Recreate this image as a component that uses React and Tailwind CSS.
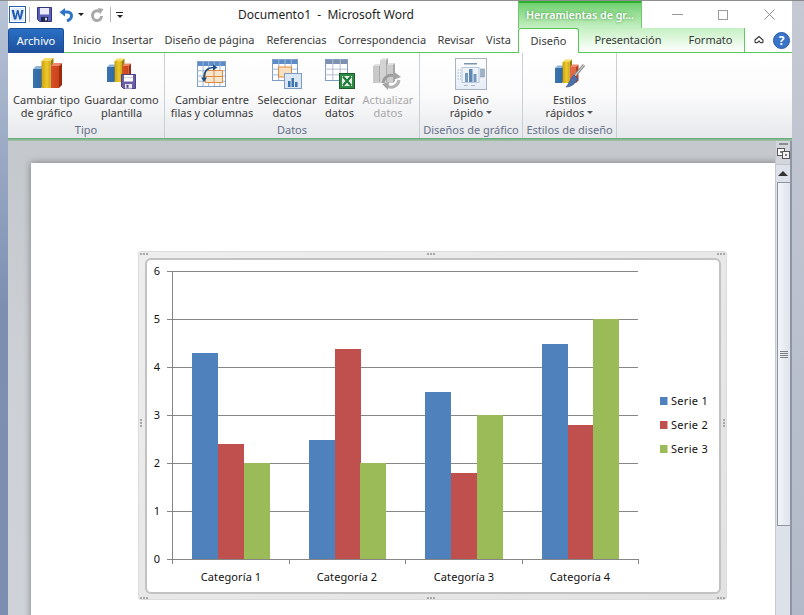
import React from "react";

function Bar({ x, y, w, h, d = 3, front, side, top, stroke }) {
  return (
    <g>
      <polygon points={`${x},${y} ${x + d},${y - d} ${x + w + d},${y - d} ${x + w},${y}`} fill={top} />
      <polygon points={`${x + w},${y} ${x + w + d},${y - d} ${x + w + d},${y + h - d} ${x + w},${y + h}`} fill={side} />
      <rect x={x} y={y} width={w} height={h} fill={front} />
      {stroke && <rect x={x + 0.5} y={y + 0.5} width={w - 1} height={h - 1} fill="none" stroke={stroke} strokeOpacity="0.5" />}
    </g>
  );
}
const BLUE = { front: "url(#gBlue)", side: "#1f4f86", top: "#8fb4dc" };
const YEL = { front: "url(#gYel)", side: "#9b7d10", top: "#f6dc63" };
const RED = { front: "url(#gRed)", side: "#9c2c10", top: "#f0896c" };

function Defs() {
  return (
    <defs>
      <linearGradient id="gBlue" x1="0" x2="1" y1="0" y2="0"><stop offset="0" stopColor="#3d74ad" /><stop offset="1" stopColor="#2e6aa8" /></linearGradient>
      <linearGradient id="gYel" x1="0" x2="1" y1="0" y2="0"><stop offset="0" stopColor="#c9a214" /><stop offset="0.6" stopColor="#eec92a" /><stop offset="1" stopColor="#cfa818" /></linearGradient>
      <linearGradient id="gRed" x1="0" x2="1" y1="0" y2="0"><stop offset="0" stopColor="#d9502a" /><stop offset="1" stopColor="#c94218" /></linearGradient>
    </defs>
  );
}

function Floppy({ x, y, s = 15 }) {
  const k = s / 15;
  return (
    <g transform={`translate(${x} ${y}) scale(${k})`}>
      <path d="M0.5 0.5H14.5V14.5H2.5L0.5 12.5Z" fill="#6a5ea8" stroke="#4a4284" />
      <rect x="3" y="1" width="9" height="6.5" fill="#fff" />
      <rect x="3" y="3" width="9" height="0.8" fill="#c9c5e0" />
      <rect x="4" y="10" width="7" height="4.5" fill="#efeef7" />
      <rect x="5.5" y="10.8" width="2" height="3" fill="#4a4284" />
    </g>
  );
}

function IconChartType() {
  return (
    <svg width="32" height="32" viewBox="0 0 32 32">
      <Defs />
      <Bar x={2} y={11} w={8} h={19} {...BLUE} />
      <Bar x={10.5} y={3} w={9} h={27} {...YEL} />
      <Bar x={20} y={8} w={8} h={22} {...RED} />
    </svg>
  );
}
function IconSaveTemplate() {
  return (
    <svg width="32" height="32" viewBox="0 0 32 32">
      <Defs />
      <Bar x={1} y={9} w={7} h={15} d={2.5} {...BLUE} />
      <Bar x={8.5} y={3} w={7.5} h={21} d={2.5} {...YEL} />
      <Bar x={16.5} y={8} w={6} h={16} d={2.5} {...RED} />
      <Floppy x={15} y={16} />
    </svg>
  );
}
function Grid({ x, y, w, h, cols, rows, head = "#5b8cc8", line = "#9db6d6" }) {
  const cw = w / cols;
  const rh = (h - 4) / rows;
  return (
    <g>
      <rect x={x + 0.5} y={y + 0.5} width={w} height={h} fill="#fff" stroke="#7f9dc2" />
      <rect x={x + 1} y={y + 1} width={w - 1} height={4} fill={head} />
      {Array.from({ length: cols - 1 }, (_, i) => (
        <line key={i} x1={x + cw * (i + 1) + 0.5} x2={x + cw * (i + 1) + 0.5} y1={y} y2={y + h} stroke={line} />
      ))}
      {Array.from({ length: rows - 1 }, (_, i) => (
        <line key={i} y1={y + 4 + rh * (i + 1) + 0.5} y2={y + 4 + rh * (i + 1) + 0.5} x1={x} x2={x + w} stroke={line} />
      ))}
    </g>
  );
}
function IconSwitch() {
  return (
    <svg width="32" height="32" viewBox="0 0 32 32">
      <Grid x={1} y={3} w={28} h={25} cols={5} rows={4} />
      <rect x="9.5" y="12.5" width="17" height="12" fill="#f3e6cf" stroke="#e58a3a" />
      <line x1="18" x2="18" y1="12" y2="25" stroke="#e58a3a" />
      <line x1="9" x2="27" y1="18.5" y2="18.5" stroke="#e58a3a" />
      <path d="M8 20C8 13 12 9.5 18 9.5" fill="none" stroke="#1f4f86" strokeWidth="1.6" />
      <path d="M17 6.5L21.5 9.5L17 12.5Z" fill="#1f4f86" />
      <path d="M5 19.5H11L8 24Z" fill="#1f4f86" />
    </svg>
  );
}
function IconSelect() {
  return (
    <svg width="32" height="32" viewBox="0 0 32 32">
      <Grid x={1} y={1} w={25} h={21} cols={4} rows={3} />
      <rect x="7.5" y="9" width="13" height="10" fill="#f7dfc0" stroke="#e58a3a" />
      <rect x="13.5" y="15.5" width="17" height="15" fill="#dbe7f5" stroke="#7f9dc2" />
      <rect x="17" y="23" width="2.5" height="6" fill="#3d74ad" />
      <rect x="20.5" y="20" width="2.5" height="9" fill="#3d74ad" />
      <rect x="24" y="24" width="2.5" height="5" fill="#3d74ad" />
    </svg>
  );
}
function IconEdit() {
  return (
    <svg width="32" height="32" viewBox="0 0 32 32">
      <Grid x={1} y={1} w={22} h={21} cols={3} rows={3} head="#7f8fb0" line="#b3bed0" />
      <rect x="15.5" y="15.5" width="15" height="15" fill="#2f8a45" stroke="#1c5c2c" />
      <rect x="18" y="18" width="10" height="10" fill="#e7f3e9" />
      <path d="M19 18.5L27 27.5M27 18.5L19 27.5" stroke="#1c7a35" strokeWidth="2.2" />
    </svg>
  );
}
function IconUpdate() {
  return (
    <svg width="32" height="32" viewBox="0 0 32 32">
      <Bar x={1} y={8} w={6} h={17} d={2} front="#c9c9c9" side="#a8a8a8" top="#e0e0e0" />
      <Bar x={8} y={2} w={6} h={23} d={2} front="#d3d3d3" side="#aaaaaa" top="#e6e6e6" />
      <Bar x={15} y={7} w={6} h={18} d={2} front="#cdcdcd" side="#a8a8a8" top="#e0e0e0" />
      <path d="M11 25C12 19 17 16 23 18" fill="none" stroke="#9d9d9d" strokeWidth="3" />
      <path d="M21 13L29 19L21 22Z" fill="#a5a5a5" />
      <path d="M27 22C26 28 20 31 15 28" fill="none" stroke="#b3b3b3" strokeWidth="3" />
      <path d="M17 24L10 26L16 32Z" fill="#a5a5a5" />
    </svg>
  );
}
function IconLayout() {
  return (
    <svg width="32" height="32" viewBox="0 0 32 32">
      <defs>
        <linearGradient id="gLay" x1="0" x2="0" y1="0" y2="1"><stop offset="0" stopColor="#fff" /><stop offset="1" stopColor="#e6edf6" /></linearGradient>
      </defs>
      <rect x="0.5" y="0.5" width="31" height="31" fill="url(#gLay)" stroke="#a9b3c4" />
      <rect x="9" y="5" width="13" height="1.5" fill="#7f93ad" />
      <rect x="7" y="9.5" width="17" height="15" fill="#eef3f9" stroke="#b8c7da" />
      <path d="M2.5 12H6M2.5 15H6M2.5 18H6M2.5 21H6" stroke="#a9b8cb" strokeDasharray="1.5 1" />
      <rect x="10" y="15" width="3" height="9" fill="#7398c2" />
      <rect x="14" y="11" width="3.5" height="13" fill="#5f88b6" />
      <rect x="18.5" y="16" width="3" height="8" fill="#7398c2" />
      <rect x="25.5" y="11" width="4" height="8" fill="#9fb2c8" stroke="#7f93ad" strokeWidth="0.5" />
      <path d="M9 27.5H13M16 27.5H20" stroke="#a9b8cb" />
    </svg>
  );
}
function IconStyles() {
  return (
    <svg width="32" height="32" viewBox="0 0 32 32">
      <Defs />
      <Bar x={1} y={10} w={7} h={15} d={2.5} {...BLUE} />
      <Bar x={8.5} y={4} w={7} h={21} d={2.5} {...YEL} />
      <Bar x={16} y={9} w={6} h={16} d={2.5} front="#e06a48" side="#b33d20" top="#f0896c" />
      <path d="M30 7L19 20" stroke="#8f8f8f" strokeWidth="3" />
      <path d="M30 7L19 20" stroke="#dedede" strokeWidth="1" />
      <path d="M20 17L24 21C21 26 17 29 12 29C15 26 16 21 20 17Z" fill="#4f6fa8" stroke="#2f4f86" strokeWidth="0.6" />
    </svg>
  );
}

function RibbonButton({ w, icon, lines, disabled, caret }) {
  return (
    <div className={`flex flex-col items-center ${disabled ? "text-[#a8a8a8]" : "text-[#3a3a3a]"}`} style={{ width: w }}>
      <div className="h-[32px] mt-[5px] flex items-center justify-center">{icon}</div>
      <div className="mt-[3px] text-center leading-[13px] whitespace-nowrap">
        <div>{lines[0]}</div>
        <div className="flex items-center justify-center gap-[3px]">
          {lines[1]}
          {caret && <span className="w-0 h-0 border-x-[3px] border-x-transparent border-t-[3px] border-t-[#555]" />}
        </div>
      </div>
    </div>
  );
}

function Group({ w, label, children, pad = 0 }) {
  return (
    <div className="flex flex-col border-r border-[#c9d0d4] h-full" style={{ width: w }}>
      <div className="flex flex-1" style={{ paddingLeft: pad }}>{children}</div>
      <div className="h-[15px] leading-[14px] text-center text-[#66708a] whitespace-nowrap">{label}</div>
    </div>
  );
}

function Tab({ w, children, className = "" }) {
  return (
    <div className={`h-full flex items-center justify-center whitespace-nowrap text-[#3a3a3a] pt-px ${className}`} style={{ width: w }}>
      {children}
    </div>
  );
}

function Dots({ className, vertical }) {
  return (
    <div className={`absolute flex ${vertical ? "flex-col" : ""} gap-[1px] ${className}`}>
      {[0, 1, 2].map((i) => (
        <span key={i} className="w-[2px] h-[2px] bg-[#a8a8a8]" />
      ))}
    </div>
  );
}

const cats = [
  { n: "Categoría 1", cx: 231, b: [[192, 353], [218, 444], [244, 463]] },
  { n: "Categoría 2", cx: 347, b: [[309, 440], [335, 349], [360, 463]] },
  { n: "Categoría 3", cx: 464, b: [[425, 392], [451, 473], [477, 415]] },
  { n: "Categoría 4", cx: 580, b: [[542, 344], [568, 425], [593, 319]] },
];
const colors = ["#4F81BD", "#C0504D", "#9BBB59"];
const FONT = "'Noto Sans', 'Open Sans', sans-serif";

function Chart() {
  return (
    <svg width="574" height="334" viewBox="146 259 574 334" className="block" style={{ fontFamily: FONT }}>
      {[271, 319, 367, 415, 463, 511].map((y) => (
        <line key={y} x1="167" x2="638" y1={y + 0.5} y2={y + 0.5} stroke="#868686" />
      ))}
      {cats.map((c) =>
        c.b.map(([x, y], i) => <rect key={x} x={x} y={y} width="26" height={559 - y} fill={colors[i]} />)
      )}
      <line x1="167" x2="638" y1="559.5" y2="559.5" stroke="#868686" />
      <line x1="172.5" x2="172.5" y1="271" y2="560" stroke="#868686" />
      {[172, 289, 405, 522, 638].map((x) => (
        <line key={x} x1={x + 0.5} x2={x + 0.5} y1="559" y2="564" stroke="#868686" />
      ))}
      {[6, 5, 4, 3, 2, 1, 0].map((v, i) => (
        <text key={v} x="157" y={275 + i * 48} textAnchor="middle" fontSize="11" fill="#111">{v}</text>
      ))}
      {cats.map((c) => (
        <text key={c.n} x={c.cx} y="581" textAnchor="middle" fontSize="11" fill="#111" letterSpacing="0.1">{c.n}</text>
      ))}
      {["Serie 1", "Serie 2", "Serie 3"].map((s, i) => (
        <g key={s}>
          <rect x="660" y={397 + i * 24} width="7.5" height="8" fill={colors[i]} />
          <text x="671" y={405 + i * 24} fontSize="11" fill="#111" letterSpacing="0.3">{s}</text>
        </g>
      ))}
    </svg>
  );
}

export default function App() {
  return (
    <div className="w-[804px] h-[615px] overflow-hidden flex text-[11px]" style={{ fontFamily: FONT }}>
      <div className="w-[8px] h-full bg-gradient-to-b from-[#b9c4d6] via-[#7c8fb2] to-[#7d8eb0] border-t border-[#8a8a8a]" />
      <div className="w-[784px] h-full flex flex-col">
        {/* Title bar */}
        <div className="h-[28px] bg-white border-t border-[#8f8f8f] flex relative">
          <div className="flex items-center w-[510px] h-[27px]">
            <svg width="17" height="17" viewBox="0 0 17 17" className="ml-[1px]">
              <rect x="0.5" y="0.5" width="16" height="16" fill="#fff" stroke="#2a5ea8" />
              <rect x="2" y="2" width="13" height="13" fill="#dfeafa" />
              <path d="M2.5 4H5L6.3 10.5L8 4H9.5L11 10.5L12.3 4H14.6L12.2 13.5H10.2L8.7 7.5L7.2 13.5H5Z" fill="#1f5bb0" />
            </svg>
            <div className="w-px h-[15px] bg-[#b9b9b9] ml-[3px]" />
            <svg width="15" height="15" viewBox="0 0 15 15" className="ml-[7px]">
              <path d="M0.5 0.5H14.5V14.5H2.5L0.5 12.5Z" fill="#5a5fb8" stroke="#33357c" />
              <rect x="3" y="1" width="9" height="6.5" fill="#eceaf8" />
              <rect x="4" y="10" width="7" height="4.5" fill="#22264f" />
              <rect x="8" y="10.8" width="2" height="2.6" fill="#d5d5e6" />
            </svg>
            <svg width="14" height="14" viewBox="0 0 14 14" className="ml-[7px]">
              <path d="M4 4H8.5C11 4 12.5 5.7 12.5 7.8C12.5 10 11 11.8 8 13" fill="none" stroke="#2f73c8" strokeWidth="3" />
              <path d="M0.5 4.2L6 0V8.5Z" fill="#2f73c8" />
            </svg>
            <span className="ml-[5px] w-0 h-0 border-x-[3px] border-x-transparent border-t-[3px] border-t-[#222]" />
            <svg width="14" height="14" viewBox="0 0 14 14" className="ml-[6px]">
              <path d="M10 3.5C6.5 1.5 2.5 3.5 2.5 7.5C2.5 11 5 12.5 7 12.5C9.5 12.5 11.5 10.5 11.5 8" fill="none" stroke="#a9a9a9" strokeWidth="3" />
              <path d="M8 0L13.5 1L10 6.5Z" fill="#a9a9a9" />
            </svg>
            <div className="w-px h-[15px] bg-[#b9b9b9] ml-[6px]" />
            <div className="ml-[5px] flex flex-col items-center gap-[2px]">
              <span className="w-[7px] h-px bg-[#222]" />
              <span className="w-0 h-0 border-x-[3.5px] border-x-transparent border-t-[3.5px] border-t-[#222]" />
            </div>
            <span className="ml-[115px] text-[12px] text-[#1e1e1e] whitespace-pre">Documento1  -  Microsoft Word</span>
          </div>
          <div className="w-[124px] h-[27px] border-t-[2px] border-x border-x-[#6fc96f] border-t-[#2fb02f] bg-gradient-to-b from-[#6fd06f] to-[#c6efc4] flex items-center justify-center pt-px text-white font-semibold text-[10.6px] whitespace-nowrap [text-shadow:0_0_3px_#3d8f3d]">
            Herramientas de gr...
          </div>
          <div className="flex-1 relative text-[#8b8b8b]">
            <div className="flex items-center h-[27px]">
              <span className="ml-[30px] w-[11px] h-px bg-[#9a9a9a]" />
              <span className="ml-[35px] w-[10px] h-[10px] border border-[#9a9a9a]" />
              <svg width="11" height="11" viewBox="0 0 11 11" className="ml-[36px]">
                <path d="M0.5 0.5L10.5 10.5M10.5 0.5L0.5 10.5" stroke="#8f8f8f" />
              </svg>
            </div>
          </div>
        </div>
        {/* Tabs */}
        <div className="h-[25px] bg-white flex border-b border-[#55c855]">
          <div className="w-[56px] h-[25px] rounded-t-[3px] bg-gradient-to-b from-[#2a70c4] to-[#1d4f9c] flex items-center justify-center text-white border-x border-t border-[#1c4d96]">Archivo</div>
          <Tab w={46}>Inicio</Tab>
          <Tab w={45}>Insertar</Tab>
          <Tab w={109}>Diseño de página</Tab>
          <Tab w={65}>Referencias</Tab>
          <Tab w={106}>Correspondencia</Tab>
          <Tab w={42}>Revisar</Tab>
          <Tab w={41} className="pl-[2px]">Vista</Tab>
          <div className="w-[227px] h-[24px] flex bg-gradient-to-b from-[#c4f0c2] to-white border-r border-[#62c962]">
            <Tab w={61} className="bg-white border-x border-t border-[#55c855] rounded-t-[3px] h-[25px]!">Diseño</Tab>
            <Tab w={98}>Presentación</Tab>
            <Tab w={67}>Formato</Tab>
          </div>
          <div className="flex-1 flex items-center">
            <svg width="12" height="10" viewBox="0 0 12 10" className="ml-[8px]">
              <path d="M2 5L6 1.5L10 5L10 7C8.5 8.5 7 7.5 6 6C5 7.5 3.5 8.5 2 7Z" fill="none" stroke="#333" strokeWidth="1.1" />
            </svg>
            <svg width="17" height="17" viewBox="0 0 17 17" className="ml-[8px]">
              <circle cx="8.5" cy="8.5" r="8" fill="#3a74c9" stroke="#2a5aa6" />
              <text x="8.5" y="13" textAnchor="middle" fontSize="12" fontWeight="700" fill="#fff">?</text>
            </svg>
          </div>
        </div>
        {/* Ribbon */}
        <div className="h-[85px] flex bg-gradient-to-b from-white via-[#fbfbfc] to-[#e6e8eb] text-[#3a3a3a]">
          <Group w={157} label="Tipo">
            <RibbonButton w={77} icon={<IconChartType />} lines={["Cambiar tipo", "de gráfico"]} />
            <RibbonButton w={73} icon={<IconSaveTemplate />} lines={["Guardar como", "plantilla"]} />
          </Group>
          <Group w={255} label="Datos" pad={1}>
            <RibbonButton w={92} icon={<IconSwitch />} lines={["Cambiar entre", "filas y columnas"]} />
            <RibbonButton w={58} icon={<IconSelect />} lines={["Seleccionar", "datos"]} />
            <RibbonButton w={47} icon={<IconEdit />} lines={["Editar", "datos"]} />
            <RibbonButton w={50} icon={<IconUpdate />} lines={["Actualizar", "datos"]} disabled />
          </Group>
          <Group w={103} label="Diseños de gráfico">
            <RibbonButton w={102} icon={<IconLayout />} lines={["Diseño", "rápido"]} caret />
          </Group>
          <Group w={94} label="Estilos de diseño">
            <RibbonButton w={93} icon={<IconStyles />} lines={["Estilos", "rápidos"]} caret />
          </Group>
        </div>
        <div className="h-[3px] bg-gradient-to-b from-[#62a874] to-[#a7c7ae]" />
        {/* Document area */}
        <div className="flex-1 flex min-h-0">
          <div className="flex-1 bg-gradient-to-b from-[#c4c7cc] via-[#cdd0d5] to-[#cfd2d8] pl-[23px] pt-[22px] overflow-hidden">
            <div className="h-[600px] w-[800px] bg-white shadow-[0_0_7px_rgba(0,0,0,0.4)] pl-[107px] pt-[88px]">
              <div className="relative w-[589px] h-[349px] rounded-[3px] border border-[#dcdcdc] bg-gradient-to-br from-[#eeeeee] to-[#e2e2e2] p-[6px]">
                <div className="bg-white border-2 border-[#c2c2c2] rounded-[6px] w-[576px] h-[336px] overflow-hidden">
                  <div className="-m-px"><Chart /></div>
                </div>
                <Dots className="top-[1px] left-[288px]" />
                <Dots className="bottom-[0px] left-[288px]" />
                <Dots className="left-[1px] top-[167px]" vertical />
                <Dots className="right-[1px] top-[167px]" vertical />
                <Dots className="top-[1px] left-[1px]" />
                <Dots className="top-[1px] right-[1px]" />
                <Dots className="bottom-[0px] left-[1px]" />
                <Dots className="bottom-[0px] right-[1px]" />
              </div>
            </div>
          </div>
          {/* Scrollbar */}
          <div className="w-[17px] bg-[#dde1ea] flex flex-col items-center border-l border-[#c4c8d0] border-r-2 border-r-[#8f95a3]">
            <div className="w-full h-[24px] flex flex-col items-center border-b border-[#c0c4cc] bg-[#d3d6dc]">
              <span className="w-[9px] h-[2px] bg-[#8c8c8c] mt-[2px]" />
              <svg width="13" height="13" viewBox="0 0 13 13" className="mt-[2px]">
                <rect x="0.5" y="1.5" width="7" height="7" fill="#fff" stroke="#555" />
                <rect x="5.5" y="4.5" width="7" height="7" fill="#f2f2f2" stroke="#555" />
                <circle cx="4" cy="5" r="1" fill="#555" />
                <circle cx="9" cy="8" r="1" fill="#555" />
              </svg>
            </div>
            <div className="h-[17px] flex items-center justify-center">
              <span className="w-0 h-0 border-x-[5px] border-x-transparent border-b-[5px] border-b-[#333]" />
            </div>
            <div className="w-full h-[344px] border border-[#8f95a3] bg-gradient-to-r from-[#f2f4f8] to-[#dfe3ec] flex flex-col items-center justify-center gap-px -mr-px">
              <span className="w-[8px] h-px bg-[#7d7d7d]" />
              <span className="w-[8px] h-px bg-[#7d7d7d]" />
              <span className="w-[8px] h-px bg-[#7d7d7d]" />
              <span className="w-[8px] h-px bg-[#7d7d7d]" />
            </div>
          </div>
        </div>
      </div>
      <div className="flex-1 h-full bg-gradient-to-b from-[#c4c9d3] to-[#b2b9c8] border-t border-[#8a8a8a]" />
    </div>
  );
}
